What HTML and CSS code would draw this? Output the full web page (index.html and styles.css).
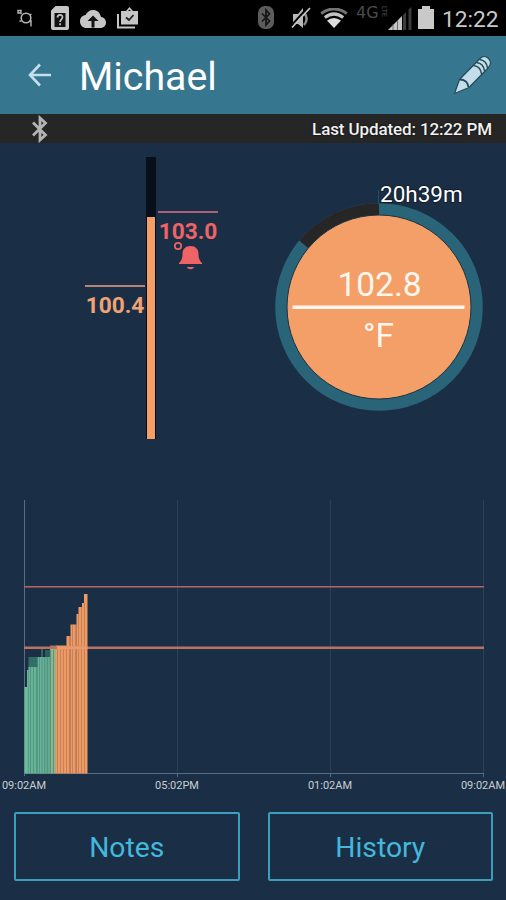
FILE: index.html
```html
<!DOCTYPE html>
<html lang="en">
<head>
    <meta charset="UTF-8">
    <meta name="viewport" content="width=device-width, initial-scale=1.0">
    <title>Michael</title>
    <link rel="stylesheet" href="styles.css">
</head>
<body>
    <div class="status-bar">
        <div class="status-left">
            <svg class="icon-sync" width="18" height="20" viewBox="0 0 18 20" fill="none" stroke="#b5b5b5" stroke-width="1.6">
                <circle cx="9" cy="9" r="4.8"/>
                <path d="M1 1.500h3v2.500H1zM4.500 5l-1-1M12.500 12.500l1.500-.5v5.500M4.500 12H2.500M13 6l1.500-1" stroke-width="1.4"/>
            </svg>
            <svg class="icon-sim" width="18" height="24" viewBox="0 0 18 24">
                <path d="M4.500 0H16a2 2 0 0 1 2 2v20a2 2 0 0 1-2 2H2a2 2 0 0 1-2-2V4.500z" fill="#c6c6c6"/>
                <path d="M3.500 7h11v14h-11z" fill="#111"/>
                <path d="M6.500 11.500c0-3.500 5-3.500 5-.2 0 2-2.400 2.100-2.400 4.600M9.100 17.300v2" fill="none" stroke="#c6c6c6" stroke-width="1.700"/>
            </svg>
            <svg class="icon-cloud" width="26" height="18" viewBox="0 0 26 18">
                <path d="M21 7C20 2.600 16.900 0 13 0 9.700 0 7 2 5.600 5 2.300 5.300 0 8 0 11.400 0 15 2.900 18 6.500 18H20.600C23.600 18 26 15.600 26 12.500 26 9.600 23.800 7.200 21 7z" fill="#c6c6c6"/>
                <path d="M13 5.500l5.500 5.500h-4v6.500h-3V11h-4z" fill="#111"/>
            </svg>
            <svg class="icon-bag" width="22" height="22" viewBox="0 0 22 22">
                <path d="M1 7v13.500h17" fill="none" stroke="#c6c6c6" stroke-width="2"/>
                <path d="M4 4h5l3.500-4L16 4h5v13.500H4z" fill="#c6c6c6"/>
                <path d="M11 4l1.500-1.600L14 4z" fill="#111"/>
                <path d="M9 10.500l3 2.500 4.500-5" fill="none" stroke="#222" stroke-width="1.800"/>
            </svg>
        </div>
        <div class="status-right">
            <svg class="icon-bt-small" width="16" height="23" viewBox="0 0 16 23">
                <rect width="16" height="23" rx="7" fill="#5c5c5c"/>
                <path d="M4 7.500l7.500 7.500-3.500 4V4l3.500 4L4 15.500" fill="none" stroke="#161616" stroke-width="1.700"/>
            </svg>
            <svg class="icon-mute" width="20" height="23" viewBox="0 0 20 23">
                <path d="M2 7h5l5-6v20l-5-4H2z" fill="#b8b8b8"/>
                <path d="M13 6c3.500 3 3.500 8 0 12" fill="none" stroke="#8c8c8c" stroke-width="2.500"/>
                <path d="M0 19L17 0" stroke="#000" stroke-width="2"/>
                <path d="M1 20.500L19 1" stroke="#c6c6c6" stroke-width="1.800"/>
            </svg>
            <svg class="icon-wifi" width="28" height="20" viewBox="0 0 28 20">
                <path d="M1.200 5.500Q14-3.500 26.800 5.500" fill="none" stroke="#747474" stroke-width="3"/>
                <path d="M4.800 9.500Q14 2.500 23.200 9.500" fill="none" stroke="#c2c2c2" stroke-width="3.200"/>
                <path d="M14 20L7 12.500Q14 7.500 21 12.500z" fill="#dcdcdc"/>
            </svg>
            <div class="network">
                <span class="network-type">4G</span>
                <span class="network-lte">LTE</span>
            </div>
            <svg class="icon-signal" width="24" height="23" viewBox="0 0 24 23">
                <path d="M0 23L14 9v14z" fill="#c6c6c6"/>
                <path d="M5 17v6M9.500 13v10" stroke="#555" stroke-width=".8"/>
                <path d="M15 8l3-3v18h-3zM20.500 2.500L23.500 0v23h-3z" fill="#3b3b3b"/>
            </svg>
            <svg class="icon-battery" width="16" height="23" viewBox="0 0 16 23">
                <path d="M4 0h8v3h4v20H0V3h4z" fill="#c9c9c9"/>
            </svg>
            <span class="clock">12:22</span>
        </div>
    </div>

    <header class="app-bar">
        <svg class="icon-back" width="24" height="24" viewBox="0 0 24 24" fill="none" stroke="#c3e0ec" stroke-width="2.600">
            <path d="M12 1.500L2 12l10 10.500M2 12h21"/>
        </svg>
        <h1 class="title">Michael</h1>
        <svg class="icon-edit" width="40" height="42" viewBox="0 0 40 42">
            <path d="M2.500 39.500L7.500 25.500 28 4.500C30.500 2 34 2 36.500 4.500c2.500 2.500 2.500 6 0 9L17 33.500z" fill="#c3dde9" stroke="#254a5a" stroke-width="1.200" stroke-linejoin="round"/>
            <path d="M8 25.500c4.500 0 8 3 8.500 7.500" fill="none" stroke="#254a5a" stroke-width="2"/>
            <path d="M21.500 11.500c4.500.5 7.500 4 8 8.500M24.500 8.500c4.500.5 7.500 4 8 8.500M27.500 5.500c4.500.5 7.500 4 8 8.500" fill="none" stroke="#254a5a" stroke-width="1.500"/>
        </svg>
    </header>

    <div class="sync-bar">
        <svg class="icon-bt" width="17" height="28" viewBox="0 0 17 28" fill="none" stroke="#b4b4b4" stroke-width="2.800">
            <path d="M2 7.500L14.500 20 9 25V3l5.500 5L2 20.500"/>
        </svg>
        <span class="updated">Last Updated: 12:22 PM</span>
    </div>

    <section class="readings">
        <div class="limit low">100.4</div>
        <div class="thermometer">
            <div class="mercury"></div>
        </div>
        <div class="limit high">
            <span>103.0</span>
            <svg class="icon-bell" width="30" height="30" viewBox="0 0 30 30" fill="#ee6365">
                <circle cx="5" cy="5" r="3.200" fill="none" stroke="#ee6365" stroke-width="1.700"/>
                <path d="M6 22c2.500-2 3.500-5 3.500-9 0-5 3-8 8-8s8 3 8 8c0 4 1 7 3.500 9v1H6zM14 26h7c-.8 3-6.200 3-7 0z"/>
            </svg>
        </div>
        <svg class="gauge" width="220" height="240" viewBox="0 -10 220 240">
            <circle cx="110" cy="124" r="97.800" fill="none" stroke="#2a6478" stroke-width="12"/>
            <path d="M34.810 61.460A97.800 97.800 0 0 1 110 26.200" fill="none" stroke="#262626" stroke-width="12"/>
            <path d="M109.500 7v14" stroke="#224e64" stroke-width="1"/>
            <circle cx="110" cy="124" r="92" fill="#f39f67" stroke="#1a3446" stroke-width="1"/>
            <path d="M23.500 124.200h172" stroke="#fff6ee" stroke-width="3.500"/>
            <text class="gauge-time" x="111" y="19">20h39m</text>
            <text class="gauge-value" x="110.500" y="113">102.8</text>
            <text class="gauge-value" x="109.500" y="164">°F</text>
        </svg>
    </section>

    <svg class="chart" width="506" height="310" viewBox="0 0 506 310">
        <path d="M177.500 10v276M330.500 10v276M483.500 10v276" stroke="#2b4158"/>
        <path d="M24.500 10v276M24 283.500h460M177.500 283v4M330.500 283v4M483.500 283v4" fill="none" stroke="#566e82"/>
        <g id="bars"></g>
        <path d="M24 96.700h460" stroke="#b96269" stroke-width="1.600"/>
        <path d="M24 157.700h460" stroke="#b87460" stroke-width="2.600"/>
        <path d="M57 157.700h30.500" stroke="#eb9a6b" stroke-width="3"/>
        <g class="chart-labels">
            <text x="24" y="299">09:02AM</text>
            <text x="177" y="299">05:02PM</text>
            <text x="330" y="299">01:02AM</text>
            <text x="483" y="299">09:02AM</text>
        </g>
    </svg>

    <div class="actions">
        <button class="action">Notes</button>
        <button class="action">History</button>
    </div>

    <script src="script.js"></script>
</body>
</html>
```

FILE: styles.css
```css
* {
    box-sizing: border-box;
    margin: 0;
    padding: 0;
    font-family: Roboto, "Liberation Sans", sans-serif;
}

body {
    display: flex;
    flex-direction: column;
    height: 900px;
    background-color: #1a2f46;
    overflow: hidden;
}

svg {
    display: block;
    flex-shrink: 0;
}

/* Status bar */
.status-bar {
    display: flex;
    justify-content: space-between;
    height: 36px;
    padding: 6px 7px 0 17px;
    background-color: #000;
}

.status-left,
.status-right {
    display: flex;
    align-items: flex-start;
}

.icon-sync {
    margin: 3px 16px 0 0;
}

.icon-cloud {
    margin: 4px 11px 0;
}

.icon-bag {
    margin-top: 1px;
}

.icon-mute {
    margin: 1px 9px 0 17px;
}

.icon-wifi {
    margin: 2px 8px 0 0;
}

.network {
    display: flex;
    width: 32px;
    color: #4b4b4b;
}

.network-type {
    width: 23px;
    font-family: "DejaVu Sans", sans-serif;
    font-size: 16px;
    line-height: 13px;
}

.network-lte {
    font-size: 7px;
    line-height: 9px;
    writing-mode: vertical-rl;
}

.icon-signal {
    margin: 1px 6px 0 0;
}

.clock {
    width: 57px;
    margin-left: 8px;
    color: #c9c9c9;
    font-size: 22.7px;
    line-height: 27px;
}

/* Header */
.app-bar {
    display: flex;
    align-items: center;
    height: 78px;
    padding: 0 14px 0 28px;
    background-color: #37768f;
}

.title {
    flex: 1;
    margin-left: 27px;
    padding-top: 3px;
    color: #fff;
    font-size: 39.3px;
    font-weight: normal;
}

.sync-bar {
    display: flex;
    align-items: center;
    justify-content: space-between;
    height: 29px;
    padding: 0 14px 0 31px;
    background-color: #262626;
}

.updated {
    color: #f2f2f2;
    font-size: 17px;
    font-weight: 500;
    letter-spacing: -0.12px;
    text-shadow: 0 0 2px #000;
}

/* Current readings */
.readings {
    display: flex;
    align-items: flex-start;
    height: 347px;
    padding: 14px 0 0 85px;
}

.thermometer {
    width: 10px;
    height: 282px;
    margin: 0 2px 0 1px;
    padding: 60px 1px 0;
    background-color: #07101a;
}

.mercury {
    height: 222px;
    background-color: #f39f67;
}

.limit {
    width: 60px;
    padding-top: 5px;
    font-size: 22.7px;
    line-height: 28px;
    font-weight: bold;
    text-align: center;
}

.low {
    margin-top: 128px;
    border-top: 2px solid #b98476;
    color: #f0a374;
}

.high {
    margin-top: 54px;
    border-top: 2px solid #aa6076;
    color: #ee6365;
}

.icon-bell {
    margin: -5px 0 0 15px;
}

.gauge {
    margin: 16px 0 0 51px;
}

.gauge-time {
    fill: #fff;
    font-size: 22.5px;
    paint-order: stroke;
    stroke: #101c2c;
    stroke-width: 2px;
}

.gauge-value {
    fill: #fff6ee;
    font-size: 33.5px;
    text-anchor: middle;
}

/* History chart */
.chart-labels {
    fill: #c9ced3;
    font-size: 11px;
    text-anchor: middle;
}

/* Buttons */
.actions {
    display: flex;
    gap: 28px;
    padding: 12px 13px 0 14px;
}

.action {
    flex: 1;
    height: 69px;
    background-color: transparent;
    border: 2px solid #3c9dbd;
    border-radius: 2px;
    color: #43b8dc;
    font-size: 28.3px;
    padding-top: 1px;
}
```

FILE: script.js
```js
const bars = document.getElementById('bars');
const chartBottom = 283.5;

// [x, width, top, color]
const readings = [
    [24.5, 3, 197, '#6dbc9e'],
    [27, 2, 180, '#67b598'],
    [28.5, 9, 167, '#326e69'],
    [28.5, 9, 177, '#67b598'],
    [37.5, 13, 167, '#67b598'],
    [41.5, 1, 159, '#5b8b8b'],
    [45, 5, 160, '#295c5b'],
    [45, 5, 167, '#5eaa90'],
    [50, 6, 159, '#9daf86'],
    [56, 10.5, 155.5, '#ee9a64'],
    [50, 6, 155.5, '#a87662', 2],
    [66.5, 4, 146, '#ee9a64'],
    [70.5, 6, 134.5, '#ee9a64'],
    [76.5, 2, 124, '#ee9a64'],
    [78.5, 3.5, 117, '#ee9a64'],
    [82, 2, 113, '#ee9a64'],
    [84, 3.5, 104, '#ee9a64']
];

const seams = [
    [30, 177], [33, 177], [36, 177], [39, 167], [44, 167], [47, 167], [50, 160], [53, 160],
    [57, 157], [60, 157], [63, 157], [66, 157], [69, 146], [72, 135],
    [75, 135], [78, 125], [81, 117], [84, 113]
];

function addBar(x, width, top, color, height) {
    const rect = document.createElementNS('http://www.w3.org/2000/svg', 'rect');
    rect.setAttribute('x', x);
    rect.setAttribute('y', top);
    rect.setAttribute('width', width);
    rect.setAttribute('height', height || chartBottom - top);
    rect.setAttribute('fill', color);
    bars.appendChild(rect);
}

readings.forEach(([x, width, top, color, height]) => addBar(x, width, top, color, height));
seams.forEach(([x, top]) => addBar(x, 1, top, x < 56 ? '#55957f' : '#c88059'));
```
